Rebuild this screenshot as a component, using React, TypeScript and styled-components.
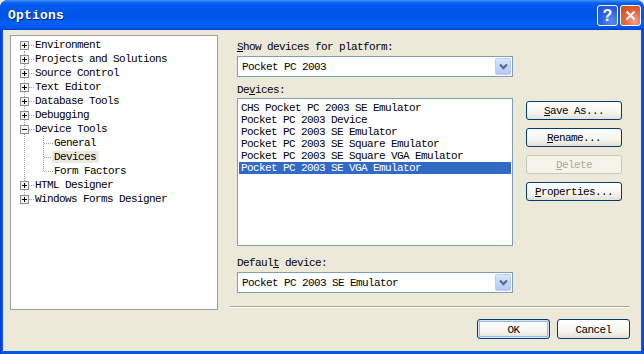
import React, { useState } from "react";
import styled, { createGlobalStyle } from "styled-components";

const GlobalStyle = createGlobalStyle`
  html, body {
    margin: 0;
    padding: 0;
    overflow: hidden;
    background: #ECE9D8;
  }
`;

const MONO = `"Liberation Mono", "DejaVu Sans Mono", monospace`;

type Node = { label: string; children?: string[] };

const tree: Node[] = [
  { label: "Environment" },
  { label: "Projects and Solutions" },
  { label: "Source Control" },
  { label: "Text Editor" },
  { label: "Database Tools" },
  { label: "Debugging" },
  { label: "Device Tools", children: ["General", "Devices", "Form Factors"] },
  { label: "HTML Designer" },
  { label: "Windows Forms Designer" },
];

const devices = [
  "CHS Pocket PC 2003 SE Emulator",
  "Pocket PC 2003 Device",
  "Pocket PC 2003 SE Emulator",
  "Pocket PC 2003 SE Square Emulator",
  "Pocket PC 2003 SE Square VGA Emulator",
  "Pocket PC 2003 SE VGA Emulator",
];

const TopGutter = ({ first, last, expanded }: { first: boolean; last: boolean; expanded: boolean }) => (
  <svg width="24" height="14" viewBox="0 0 24 14" shapeRendering="crispEdges">
    <line x1="13.5" y1={first ? 7 : 0} x2="13.5" y2={last ? 7 : 14} stroke="#A0A0A0" strokeDasharray="1 1" />
    <line x1="18" y1="7.5" x2="24" y2="7.5" stroke="#A0A0A0" strokeDasharray="1 1" />
    <rect x="9.5" y="3.5" width="8" height="8" fill="#F4F4F0" stroke="#8E8F8F" />
    <line x1="11" y1="7.5" x2="16" y2="7.5" stroke="#000" />
    {!expanded && <line x1="13.5" y1="5" x2="13.5" y2="10" stroke="#000" />}
  </svg>
);

const ChildGutter = ({ last }: { last: boolean }) => (
  <svg width="43" height="14" viewBox="0 0 43 14" shapeRendering="crispEdges">
    <line x1="13.5" y1="0" x2="13.5" y2="14" stroke="#A0A0A0" strokeDasharray="1 1" />
    <line x1="32.5" y1="0" x2="32.5" y2={last ? 8 : 14} stroke="#A0A0A0" strokeDasharray="1 1" />
    <line x1="33" y1="7.5" x2="42" y2="7.5" stroke="#A0A0A0" strokeDasharray="1 1" />
  </svg>
);

const Chevron = () => (
  <svg width="9" height="7" viewBox="0 0 9 7">
    <path d="M1 1.5 L4.5 5 L8 1.5" fill="none" stroke="#4D6185" strokeWidth="2" />
  </svg>
);

const Combo = ({ value }: { value: string }) => (
  <ComboBox>
    <ComboText>{value}</ComboText>
    <ComboButton>
      <Chevron />
    </ComboButton>
  </ComboBox>
);

const App: React.FunctionComponent = () => {
  const [selected, setSelected] = useState<number>(5);

  return (
    <>
      <GlobalStyle />
      <Window>
        <TitleBar>
          <Title>Options</Title>
          <CaptionButtons>
            <HelpBtn>?</HelpBtn>
            <CloseBtn>
              <svg width="11" height="11" viewBox="0 0 11 11">
                <path d="M1.5 1.5 L9.5 9.5 M9.5 1.5 L1.5 9.5" stroke="#fff" strokeWidth="2" />
              </svg>
            </CloseBtn>
          </CaptionButtons>
        </TitleBar>
        <Body>
          <TreePanel>
            {tree.map((node, i) => (
              <React.Fragment key={node.label}>
                <TreeRow>
                  <TopGutter first={i === 0} last={i === tree.length - 1} expanded={!!node.children} />
                  <TreeLabel>{node.label}</TreeLabel>
                </TreeRow>
                {node.children &&
                  node.children.map((c, j) => (
                    <TreeRow key={c}>
                      <ChildGutter last={j === node.children!.length - 1} />
                      <TreeLabel $active={c === "Devices"}>{c}</TreeLabel>
                    </TreeRow>
                  ))}
              </React.Fragment>
            ))}
          </TreePanel>
          <RightColumn>
            <Form>
              <Label>
                <u>S</u>how devices for platform:
              </Label>
              <Combo value="Pocket PC 2003" />
              <Label $gap={6}>
                De<u>v</u>ices:
              </Label>
              <ListRow>
                <ListBox>
                  {devices.map((d, i) => (
                    <ListItem key={d} $selected={i === selected} onClick={() => setSelected(i)}>
                      {d}
                    </ListItem>
                  ))}
                </ListBox>
                <SideButtons>
                  <Button $width={96}>
                    <u>S</u>ave As...
                  </Button>
                  <Button $width={96}>
                    <u>R</u>ename...
                  </Button>
                  <Button $width={96} disabled>
                    <u>D</u>elete
                  </Button>
                  <Button $width={96}>
                    <u>P</u>roperties...
                  </Button>
                </SideButtons>
              </ListRow>
              <Label $gap={10}>
                Defaul<u>t</u> device:
              </Label>
              <Combo value="Pocket PC 2003 SE Emulator" />
            </Form>
            <Separator />
            <Footer>
              <Button $width={73} $default>
                OK
              </Button>
              <Button $width={73}>Cancel</Button>
            </Footer>
          </RightColumn>
        </Body>
      </Window>
    </>
  );
};

export default App;

const Window = styled.div`
  width: 644px;
  height: 354px;
  display: flex;
  flex-direction: column;
  background: linear-gradient(90deg, #0831d9 0px, #0058ee 2px, #0058ee 642px, #0831d9 644px);
  border-radius: 8px 8px 0 0;
  overflow: hidden;
`;

const TitleBar = styled.div`
  height: 30px;
  flex: none;
  display: flex;
  align-items: center;
  justify-content: space-between;
  padding: 0 3px 0 8px;
  box-sizing: border-box;
  background: linear-gradient(
    180deg,
    #3d95ff 0px,
    #0a5fea 3px,
    #0058ee 6px,
    #0054e6 16px,
    #0060f8 24px,
    #0055e8 28px,
    #003dd7 30px
  );
`;

const Title = styled.span`
  font-family: ${MONO};
  font-weight: bold;
  font-size: 13px;
  letter-spacing: 0.2px;
  color: #fff;
  text-shadow: 1px 1px 0 #0a1e7d;
  margin-top: 1px;
`;

const CaptionButtons = styled.div`
  display: flex;
  gap: 2px;
  margin-top: 1px;
`;

const CaptionBtn = styled.div`
  width: 21px;
  height: 21px;
  box-sizing: border-box;
  border: 1px solid #fff;
  border-radius: 3px;
  display: flex;
  align-items: center;
  justify-content: center;
`;

const HelpBtn = styled(CaptionBtn)`
  background: radial-gradient(circle at 70% 80%, #5d8cf2 0%, #2a5ee0 55%, #1f4fd4 100%);
  color: #fff;
  font-family: "Liberation Sans", Arial, sans-serif;
  font-weight: bold;
  font-size: 16px;
`;

const CloseBtn = styled(CaptionBtn)`
  background: radial-gradient(circle at 70% 80%, #f0a58a 0%, #e2643c 50%, #c9461e 100%);
`;

const Body = styled.div`
  flex: 1;
  margin: 0 3px 3px 3px;
  background: #ece9d8;
  display: flex;
  gap: 12px;
  padding: 5px 11px 0 7px;
  font-family: ${MONO};
  font-size: 11px;
  letter-spacing: -0.6px;
  color: #000;
`;

const TreePanel = styled.div`
  width: 208px;
  height: 275px;
  flex: none;
  box-sizing: border-box;
  background: #fff;
  border: 1px solid #9d9d9d;
  padding-top: 2px;
`;

const TreeRow = styled.div`
  height: 14px;
  display: flex;
  align-items: center;
  white-space: nowrap;
  svg {
    flex: none;
    display: block;
  }
`;

const TreeLabel = styled.span<{ $active?: boolean }>`
  line-height: 13px;
  height: 12px;
  padding: 0 3px 0 2px;
  margin-left: -2px;
  background: ${(p) => (p.$active ? "#ebe9de" : "transparent")};
`;

const RightColumn = styled.div`
  width: 400px;
  display: flex;
  flex-direction: column;
`;

const Form = styled.div`
  display: flex;
  flex-direction: column;
  padding: 5px 0 0 7px;
`;

const Label = styled.div<{ $gap?: number }>`
  line-height: 14px;
  margin-top: ${(p) => p.$gap ?? 0}px;
  margin-bottom: 2px;
  white-space: nowrap;
`;

const ComboBox = styled.div`
  width: 276px;
  height: 21px;
  box-sizing: border-box;
  border: 1px solid #7f9db9;
  background: #fff;
  display: flex;
  align-items: center;
  padding: 1px;
`;

const ComboText = styled.span`
  flex: 1;
  padding: 1px 0 0 3px;
  white-space: nowrap;
`;

const ComboButton = styled.div`
  width: 16px;
  height: 17px;
  box-sizing: border-box;
  border: 1px solid #bacdf5;
  border-radius: 2px;
  background: linear-gradient(180deg, #dbe6fd 0%, #c4d5fb 50%, #b3c7f7 100%);
  display: flex;
  align-items: center;
  justify-content: center;
`;

const ListRow = styled.div`
  display: flex;
  gap: 13px;
  margin-top: -1px;
`;

const ListBox = styled.div`
  width: 276px;
  height: 148px;
  flex: none;
  box-sizing: border-box;
  border: 1px solid #7f9db9;
  background: #fff;
  padding: 3px 1px 1px 1px;
`;

const ListItem = styled.div<{ $selected?: boolean }>`
  height: 12px;
  line-height: 13px;
  padding-left: 2px;
  white-space: nowrap;
  overflow: hidden;
  cursor: default;
  background: ${(p) => (p.$selected ? "#316ac5" : "transparent")};
  color: ${(p) => (p.$selected ? "#fff" : "#000")};
`;

const SideButtons = styled.div`
  display: flex;
  flex-direction: column;
  gap: 8px;
  margin-top: 3px;
`;

const Button = styled.button<{ $width: number; $default?: boolean }>`
  width: ${(p) => p.$width}px;
  height: 19px;
  padding: 1px 0 0;
  box-sizing: border-box;
  font-family: ${MONO};
  font-size: 11px;
  letter-spacing: -0.6px;
  color: #000;
  border: 1px solid #003c74;
  border-radius: 3px;
  background: linear-gradient(180deg, #ffffff 0%, #f6f5f0 60%, #e3e1d6 100%);
  box-shadow: ${(p) => (p.$default ? "inset 0 0 0 1px #cee7ff, inset 0 0 0 2px #98b8ea" : "none")};
  cursor: default;

  &:disabled {
    color: #aca899;
    border-color: #c9c7ba;
    background: #f5f4ea;
  }
`;

const Separator = styled.div`
  margin-top: 13px;
  height: 0;
  border-top: 1px solid #aca899;
  border-bottom: 1px solid #fff;
`;

const Footer = styled.div`
  display: flex;
  justify-content: flex-end;
  gap: 7px;
  margin-top: 11px;

  button {
    height: 20px;
  }
`;
